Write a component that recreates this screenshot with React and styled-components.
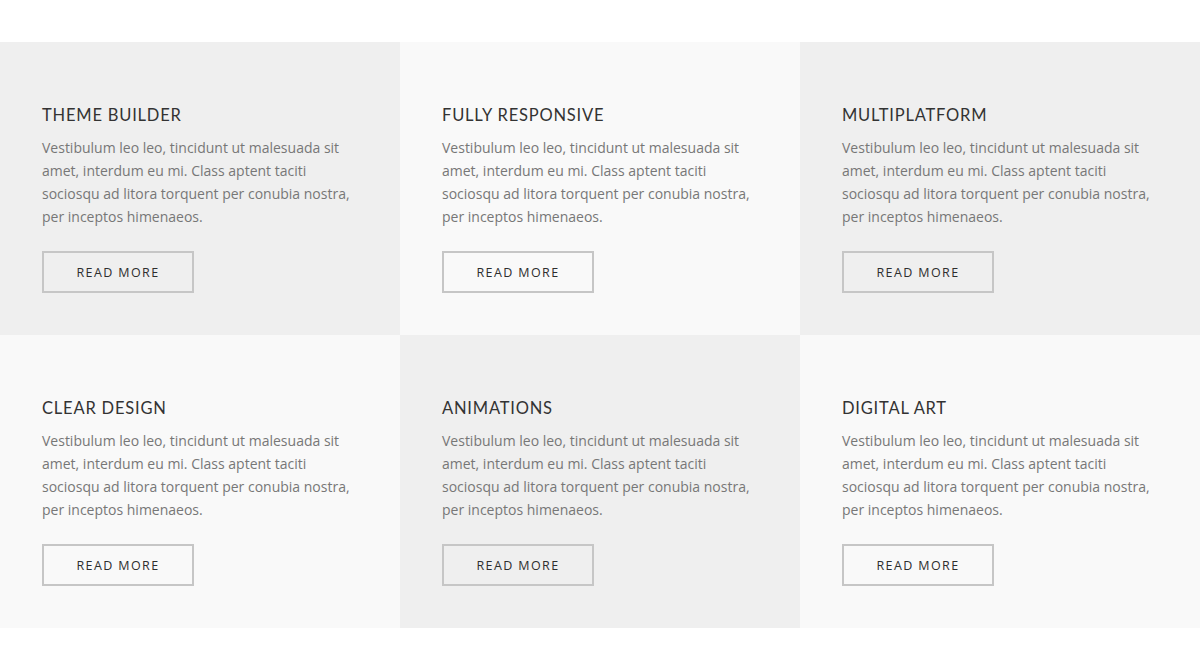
import React from 'react';
import styled, { createGlobalStyle } from 'styled-components';

const GlobalStyle = createGlobalStyle`
  html, body {
    margin: 0;
    padding: 0;
    background: #ffffff;
  }
  * {
    box-sizing: border-box;
  }
`;

const Page = styled.div`
  width: 1200px;
  height: 670px;
  padding-top: 42px;
  background: #ffffff;
`;

const Grid = styled.div`
  display: grid;
  grid-template-columns: repeat(3, 400px);
  grid-auto-rows: 293px;
`;

const Card = styled.div`
  padding: 63px 42px 0;
  background: ${(p) => (p.dark ? '#efefef' : '#f9f9f9')};
`;

const Title = styled.h3`
  margin: 0 0 11px;
  font-family: Lato, 'Open Sans', sans-serif;
  font-weight: 400;
  font-size: 16.5px;
  line-height: 20px;
  letter-spacing: 0.8px;
  color: #333333;
  text-transform: uppercase;
`;

const Text = styled.p`
  margin: 0 0 23px;
  font-family: 'Open Sans', sans-serif;
  font-size: 14px;
  line-height: 23px;
  color: #777777;
`;

const Button = styled.a`
  display: flex;
  align-items: center;
  justify-content: center;
  width: 152px;
  height: 42px;
  border: 2px solid #c6c6c6;
  font-family: 'Open Sans', sans-serif;
  font-size: 12.5px;
  font-weight: 500;
  letter-spacing: 1.4px;
  color: #2e2e2e;
  text-transform: uppercase;
  text-decoration: none;
  cursor: pointer;
`;

const features = [
  'Theme Builder',
  'Fully Responsive',
  'Multiplatform',
  'Clear Design',
  'Animations',
  'Digital Art',
];

const body =
  'Vestibulum leo leo, tincidunt ut malesuada sit amet, interdum eu mi. Class aptent taciti sociosqu ad litora torquent per conubia nostra, per inceptos himenaeos.';

export default function App() {
  return (
    <>
      <GlobalStyle />
      <Page>
        <Grid>
          {features.map((title, i) => (
            <Card key={title} dark={i % 2 === 0}>
              <Title>{title}</Title>
              <Text>{body}</Text>
              <Button>Read more</Button>
            </Card>
          ))}
        </Grid>
      </Page>
    </>
  );
}
